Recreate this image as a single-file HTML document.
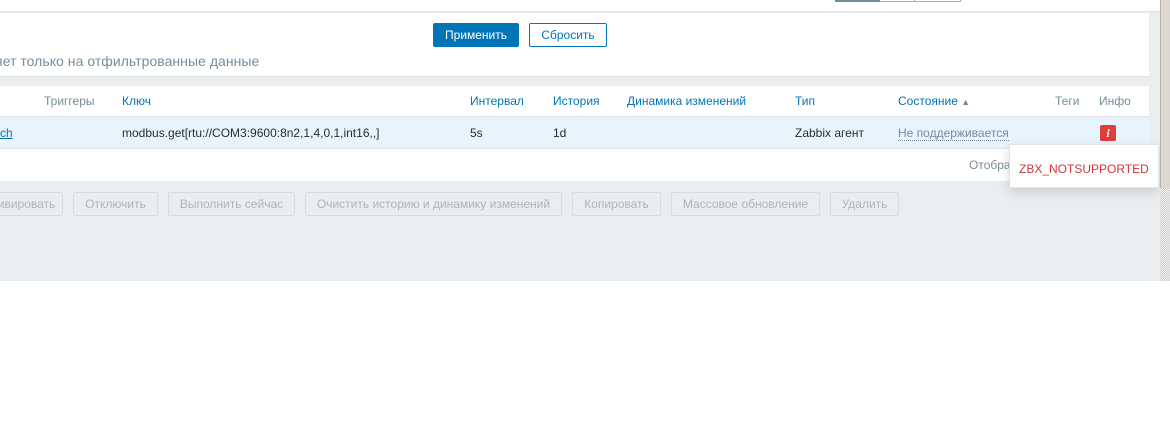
<!DOCTYPE html>
<html><head><meta charset="utf-8"><style>
*{margin:0;padding:0;box-sizing:border-box}
body{width:1170px;height:437px;background:#fff;font-family:"Liberation Sans",sans-serif;font-size:12px;position:relative;overflow:hidden;color:#1f2c33}
.a{position:absolute}
.t{position:absolute;white-space:nowrap}
.btn{position:absolute;height:24px;top:192px;border:1px solid #d8dcde;color:#acb3b7;background:#ebeef0;font-size:12px;line-height:22px;text-align:center;border-radius:2px}
.h{color:#0275b8}
.g{color:#768d99}
</style></head><body>
<div class="a" style="left:0;top:0;width:1160px;height:281px;background:#ebeef0"></div>
<div class="a" style="left:0;top:0;width:1160px;height:12px;background:#fff;border-bottom:1px solid #dfe4e7"></div>
<div class="a" style="left:835px;top:0;width:126px;height:2px;border:1px solid #a9b0b4;border-top:0;background:#fff"></div>
<div class="a" style="left:835px;top:0;width:45px;height:2px;background:#768d99"></div>
<div class="a" style="left:914px;top:0;width:1px;height:2px;background:#a9b0b4"></div>
<div class="a" style="left:0;top:13px;width:1149px;height:64px;background:#fff;border-bottom:1px solid #dfe4e7"></div>
<div class="a" style="left:433px;top:23px;width:86px;height:24px;background:#0275b8;border-radius:2px;color:#fff;text-align:center;line-height:24px">Применить</div>
<div class="a" style="left:529px;top:23px;width:78px;height:24px;border:1px solid #0275b8;border-radius:2px;color:#0275b8;text-align:center;line-height:22px">Сбросить</div>
<div class="t g" style="left:-5px;top:53px;font-size:14px;letter-spacing:0.04px">яет только на отфильтрованные данные</div>
<div class="a" style="left:0;top:86px;width:1149px;height:95px;background:#fff"></div>
<div class="a" style="left:0;top:116px;width:1149px;height:33px;background:#e8f4fd;border-top:1px solid #dfe4e7;border-bottom:1px solid #dfe4e7"></div>
<div class="t g" style="left:44px;top:94px">Триггеры</div>
<div class="t h" style="left:122px;top:94px">Ключ</div>
<div class="t h" style="left:470px;top:94px">Интервал</div>
<div class="t h" style="left:553px;top:94px">История</div>
<div class="t h" style="left:627px;top:94px">Динамика изменений</div>
<div class="t h" style="left:795px;top:94px">Тип</div>
<div class="t h" style="left:898px;top:94px">Состояние <span style="font-size:9px;color:#768d99">▲</span></div>
<div class="t g" style="left:1055px;top:94px">Теги</div>
<div class="t g" style="left:1099px;top:94px">Инфо</div>
<div class="t h" style="left:0;top:126px;text-decoration:underline">ch</div>
<div class="t" style="left:122px;top:126px">modbus.get[rtu://COM3:9600:8n2,1,4,0,1,int16,,]</div>
<div class="t" style="left:470px;top:126px">5s</div>
<div class="t" style="left:553px;top:126px">1d</div>
<div class="t" style="left:795px;top:126px">Zabbix агент</div>
<div class="t g" style="left:898px;top:126px;border-bottom:1px dotted #768d99;line-height:14px">Не поддерживается</div>
<div class="a" style="left:1100px;top:125px;width:16px;height:16px;background:#e03c3c;border-radius:2px;color:#fff;font-family:'Liberation Serif',serif;font-style:italic;font-weight:bold;text-align:center;line-height:16px;font-size:12px">i</div>
<div class="t g" style="left:969px;top:158px">Отобра</div>
<div class="a" style="left:1009px;top:144px;width:150px;height:44px;background:#fff;border:1px solid #dfe4e7;box-shadow:0 4px 10px rgba(0,0,0,.15)"></div>
<div class="t" style="left:1019px;top:162px;color:#d2353c">ZBX_NOTSUPPORTED</div>
<div class="btn" style="left:-10px;width:73px">ивировать</div>
<div class="btn" style="left:73px;width:85px">Отключить</div>
<div class="btn" style="left:168px;width:127px">Выполнить сейчас</div>
<div class="btn" style="left:305px;width:257px">Очистить историю и динамику изменений</div>
<div class="btn" style="left:572px;width:89px">Копировать</div>
<div class="btn" style="left:671px;width:149px">Массовое обновление</div>
<div class="btn" style="left:830px;width:69px">Удалить</div>
<div class="a" style="left:1160px;top:0;width:10px;height:188px;background:#dcd8d0;border-left:1px solid #b5b2ab"></div>
<div class="a" style="left:1160px;top:188px;width:10px;height:93px;background:repeating-conic-gradient(#ccc 0 25%,#f4f4f4 0 50%) 0 0/2px 2px"></div>
</body></html>
